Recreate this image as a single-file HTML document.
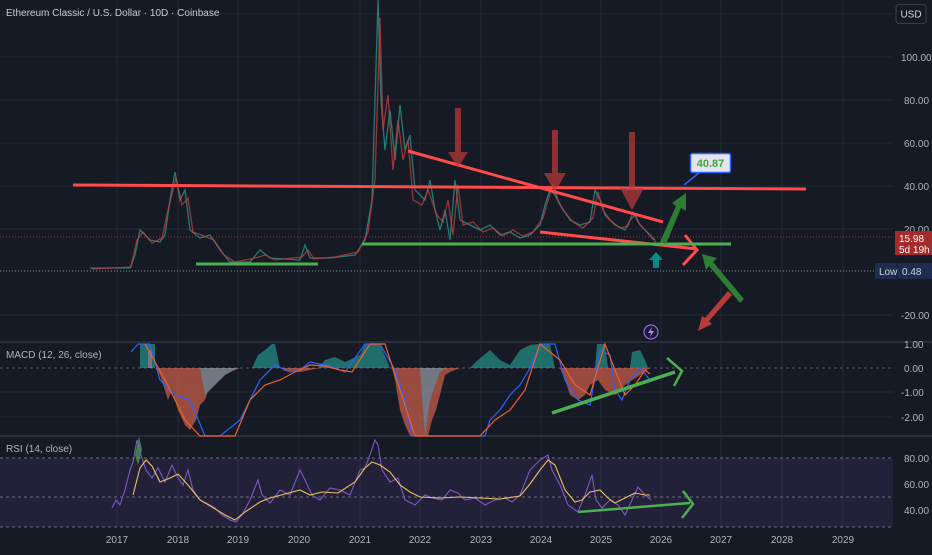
<!DOCTYPE html>
<html><head><meta charset="utf-8"><style>
html,body{margin:0;padding:0;background:#161a25;}
body{width:932px;height:550px;overflow:hidden;font-family:"Liberation Sans",sans-serif;}
svg text{font-family:"Liberation Sans",sans-serif;}
</style></head><body>
<svg width="932" height="550" viewBox="0 0 932 550" xmlns="http://www.w3.org/2000/svg">
<rect width="932" height="550" fill="#161a25"/>
<g stroke="#232838" stroke-width="1">
<line x1="117" y1="0" x2="117" y2="528"/><line x1="178" y1="0" x2="178" y2="528"/><line x1="238" y1="0" x2="238" y2="528"/><line x1="299" y1="0" x2="299" y2="528"/><line x1="360" y1="0" x2="360" y2="528"/><line x1="420" y1="0" x2="420" y2="528"/><line x1="481" y1="0" x2="481" y2="528"/><line x1="541" y1="0" x2="541" y2="528"/><line x1="601" y1="0" x2="601" y2="528"/><line x1="661" y1="0" x2="661" y2="528"/><line x1="721" y1="0" x2="721" y2="528"/><line x1="782" y1="0" x2="782" y2="528"/><line x1="843" y1="0" x2="843" y2="528"/>
<line x1="0" y1="14" x2="893" y2="14"/><line x1="0" y1="57" x2="893" y2="57"/><line x1="0" y1="100" x2="893" y2="100"/><line x1="0" y1="143" x2="893" y2="143"/><line x1="0" y1="186" x2="893" y2="186"/><line x1="0" y1="229" x2="893" y2="229"/><line x1="0" y1="315" x2="893" y2="315"/>
<line x1="0" y1="392" x2="893" y2="392"/><line x1="0" y1="417" x2="893" y2="417"/>
</g>
<line x1="0" y1="342" x2="932" y2="342" stroke="#2a2e39" stroke-width="2"/>
<line x1="0" y1="436" x2="932" y2="436" stroke="#2a2e39" stroke-width="2"/>
<line x1="0" y1="271" x2="893" y2="271" stroke="#8a8f9c" stroke-width="1" stroke-dasharray="1,2"/>
<line x1="0" y1="237" x2="893" y2="237" stroke="#a03040" stroke-width="1" stroke-dasharray="1,2"/>

<polyline fill="none" stroke="#26a69a" stroke-width="1.3" opacity="0.7" points="90,268 130,268 135,255 140,230 150,240 160,242 165,235 170,200 175,172 180,200 185,190 190,230 200,238 210,235 220,250 230,262 250,262 260,250 270,258 300,260 305,245 310,258 330,258 355,255 365,240 372,200 378,0 381,100 385,150 390,110 395,160 400,105 405,150 410,135 415,190 425,200 430,180 435,210 440,230 445,210 450,240 455,180 460,220 470,225 480,230 490,225 500,235 510,232 520,238 530,235 540,225 545,205 550,190 555,195 560,205 570,220 580,225 590,222 595,190 600,200 605,215 615,225 625,230 630,220 635,215 640,225 650,235 655,240"/>
<polyline fill="none" stroke="#c2403e" stroke-width="1.3" opacity="0.75" points="92,269 131,267 137,240 143,232 152,243 162,238 168,210 176,178 182,205 188,198 193,232 204,236 214,240 224,255 235,262 255,258 265,255 275,260 302,257 308,250 314,259 335,257 358,252 368,232 375,180 380,18 383,130 388,95 393,170 398,120 403,160 408,140 413,200 422,205 428,190 437,215 443,222 448,200 453,235 458,185 463,225 473,222 483,232 493,228 503,236 513,230 523,236 533,232 543,218 548,200 553,185 558,200 563,210 573,222 583,228 593,218 598,192 603,210 610,220 620,228 628,226 633,212 638,222 645,230 652,238 656,242"/>

<line x1="73" y1="185" x2="806" y2="189" stroke="#ff4b4b" stroke-width="3"/>
<line x1="408" y1="151" x2="663" y2="222" stroke="#ff4b4b" stroke-width="3"/>
<line x1="540" y1="232" x2="697" y2="249" stroke="#ff4b4b" stroke-width="3"/>
<polyline points="685,235 697,250 683,265" fill="none" stroke="#ff4b4b" stroke-width="3"/>
<line x1="362" y1="244" x2="731" y2="244" stroke="#4caf50" stroke-width="3"/>
<line x1="196" y1="264" x2="318" y2="264" stroke="#4caf50" stroke-width="3"/>

<g fill="#c03a3a" opacity="0.7">
<polygon points="455,108 461,108 461,152 468,152 458,168 448,152 455,152"/>
<polygon points="552,130 558,130 558,173 566,173 555,192 544,173 552,173"/>
<polygon points="629,132 635,132 635,188 644,188 632,210 620,188 629,188"/>
</g>
<polygon points="656,252 663,260 659,260 659,268 653,268 653,260 649,260" fill="#0a8a86"/>
<polygon points="660,242 676,206 672,203 686,193 686,211 681,208 666,244" fill="#2e7d32"/>
<polygon points="740,303 709,266 706,270 702,254 717,258 713,262 744,299" fill="#2e7d32"/>
<polygon points="732,295 709,321 712,324 698,331 702,316 705,318 728,291" fill="#b83a3a"/>
<line x1="684" y1="185" x2="700" y2="172" stroke="#2962ff" stroke-width="1.5"/>
<rect x="690.5" y="153.5" width="40" height="19" rx="2" fill="#e4e4ee" stroke="#2962ff" stroke-width="1.5"/>
<text x="710.5" y="167" font-size="11" fill="#43a047" text-anchor="middle" font-weight="bold">40.87</text>
<circle cx="651" cy="332" r="7" fill="#1e1a33" stroke="#8e6ce0" stroke-width="1.2"/>
<path d="M652,327 L648,333 L651,333 L650,337 L654,331 L651,331 Z" fill="#a88ef0"/>

<line x1="0" y1="368" x2="893" y2="368" stroke="#555a66" stroke-dasharray="3,3"/>
<g opacity="0.6">
<polygon fill="#26a69a" points="140,368 140,344 155,344 155,368"/>
<polygon fill="#b2b5be" points="148,368 148,350 152,350 152,368"/>
<polygon fill="#ef6c50" points="155,368 160,375 168,400 172,390 178,410 185,425 190,430 196,420 200,405 205,400 210,385 220,375 230,372 240,368"/>
<polygon fill="#b2b5be" points="200,368 205,395 215,385 225,375 238,368"/>
<polygon fill="#26a69a" points="252,368 258,355 265,350 272,344 275,344 280,368"/>
<polygon fill="#ef6c50" points="280,368 285,371 300,372 310,370 320,368"/>
<polygon fill="#26a69a" points="318,368 325,360 335,357 345,362 360,355 365,344 380,344 390,368"/>
<polygon fill="#ef6c50" points="392,368 395,380 400,410 405,425 410,436 428,436 432,420 436,410 440,395 445,375 450,372 460,368"/>
<polygon fill="#b2b5be" points="420,368 425,436 430,400 440,372 445,368"/>
<polygon fill="#26a69a" points="470,368 478,360 490,350 500,360 510,365 520,350 530,345 540,344 550,344 555,368"/>
<polygon fill="#ef6c50" points="560,368 565,380 570,395 578,400 585,395 590,385 598,380 605,390 615,395 625,385 640,375 650,368"/>
<polygon fill="#26a69a" points="595,368 597,344 605,344 608,368"/>
<polygon fill="#26a69a" points="630,368 632,352 640,350 645,360 648,368"/>
</g>
<g fill="none" stroke-width="1.2">
<polyline stroke="#2962ff" points="131,352 138,344 150,344 160,380 175,395 190,400 205,436 220,436 240,420 260,380 275,365 290,372 300,370 310,362 325,365 335,368 345,372 365,344 380,344 395,370 405,400 412,436 485,436 490,420 500,410 510,395 520,385 530,368 540,344 555,344 565,380 578,400 590,405 600,350 610,355 615,390 622,400 630,380 640,368 650,380"/>
<polyline stroke="#f0602a" points="145,344 165,380 185,420 200,436 235,436 250,400 265,385 280,380 295,372 310,365 325,366 340,370 352,372 370,344 385,344 400,390 415,436 480,436 495,420 510,410 525,390 540,344 560,360 575,385 590,395 605,344 615,370 625,395 635,385 645,370 650,374"/>
</g>
<line x1="552" y1="413" x2="675" y2="372" stroke="#4caf50" stroke-width="3.5"/>
<polyline points="667,358 682,371 674,386" fill="none" stroke="#4caf50" stroke-width="2.5"/>
<text x="6" y="358" font-size="10" fill="#b2b5be">MACD (12, 26, close)</text>

<rect x="0" y="458" width="893" height="69" fill="#7e57c2" opacity="0.13"/>
<g stroke="#6a6e7a" stroke-dasharray="3,3"><line x1="0" y1="458" x2="893" y2="458"/><line x1="0" y1="497" x2="893" y2="497"/><line x1="0" y1="527" x2="893" y2="527"/></g>
<polygon points="135,455 139,436 142,450 138,465" fill="#4caf50" opacity="0.7"/>
<polyline fill="none" stroke="#7e57c2" stroke-width="1.1" points="112,508 116,500 120,505 125,490 130,470 133,462 137,440 141,455 146,470 152,478 158,468 165,482 172,465 178,478 183,485 188,470 193,490 200,500 208,504 215,508 222,515 230,520 236,522 242,515 250,500 258,480 262,495 270,503 280,490 290,495 300,470 305,480 312,495 320,500 330,488 340,490 350,495 360,470 365,468 370,455 375,440 378,445 382,470 390,482 398,478 405,500 415,505 425,495 433,498 442,500 450,490 458,493 465,500 475,498 485,505 495,500 505,498 512,502 520,495 530,470 540,460 548,455 552,470 560,485 568,505 578,512 585,495 592,475 596,500 602,508 610,500 618,505 625,515 632,500 638,487 645,495 651,500"/>
<polyline fill="none" stroke="#e8c060" stroke-width="1.1" points="133,495 140,468 146,460 152,466 160,482 170,478 178,474 188,485 200,500 212,507 225,515 235,520 245,512 260,502 270,498 285,494 300,490 310,495 322,492 338,493 355,482 365,468 372,462 380,465 390,472 400,485 410,492 420,497 440,498 460,497 480,498 500,499 520,496 530,484 540,470 548,460 555,465 565,490 575,502 582,500 590,492 600,490 608,498 615,503 625,498 635,493 645,495 650,495"/>
<line x1="578" y1="512" x2="690" y2="503" stroke="#4caf50" stroke-width="2.5"/>
<polyline points="683,491 693,504 682,518" fill="none" stroke="#4caf50" stroke-width="2.5"/>
<text x="6" y="452" font-size="10" fill="#b2b5be">RSI (14, close)</text>

<text x="6" y="16" font-size="10" fill="#c8cad2">Ethereum Classic / U.S. Dollar · 10D · Coinbase</text>

<g font-size="10" fill="#b2b5be">
<text x="901" y="61">100.00</text><text x="904" y="104">80.00</text><text x="904" y="147">60.00</text><text x="904" y="190">40.00</text><text x="904" y="233">20.00</text><text x="901" y="319">-20.00</text>
<text x="904" y="348">1.00</text><text x="904" y="372">0.00</text><text x="901" y="396">-1.00</text><text x="901" y="421">-2.00</text>
<text x="904" y="462">80.00</text><text x="904" y="488">60.00</text><text x="904" y="514">40.00</text>
</g>
<rect x="896" y="4.5" width="30" height="19" rx="3" fill="#161a25" stroke="#3a3e4a"/>
<text x="911" y="17.5" font-size="10" fill="#d1d4dc" text-anchor="middle">USD</text>
<rect x="895" y="231" width="37" height="24" fill="#a52a2a"/>
<text x="899" y="242" font-size="10" fill="#fff">15.98</text>
<text x="899" y="253" font-size="10" fill="#fff">5d 19h</text>
<rect x="875" y="263" width="57" height="16" fill="#1e2c50"/>
<line x1="897" y1="263" x2="897" y2="279" stroke="#161a25"/>
<text x="879" y="275" font-size="10" fill="#d1d4dc">Low</text>
<text x="902" y="275" font-size="10" fill="#d1d4dc">0.48</text>
<g font-size="10" fill="#b2b5be" text-anchor="middle">
<text x="117" y="543">2017</text><text x="178" y="543">2018</text><text x="238" y="543">2019</text><text x="299" y="543">2020</text><text x="360" y="543">2021</text><text x="420" y="543">2022</text><text x="481" y="543">2023</text><text x="541" y="543">2024</text><text x="601" y="543">2025</text><text x="661" y="543">2026</text><text x="721" y="543">2027</text><text x="782" y="543">2028</text><text x="843" y="543">2029</text>
</g>
</svg>
</body></html>
